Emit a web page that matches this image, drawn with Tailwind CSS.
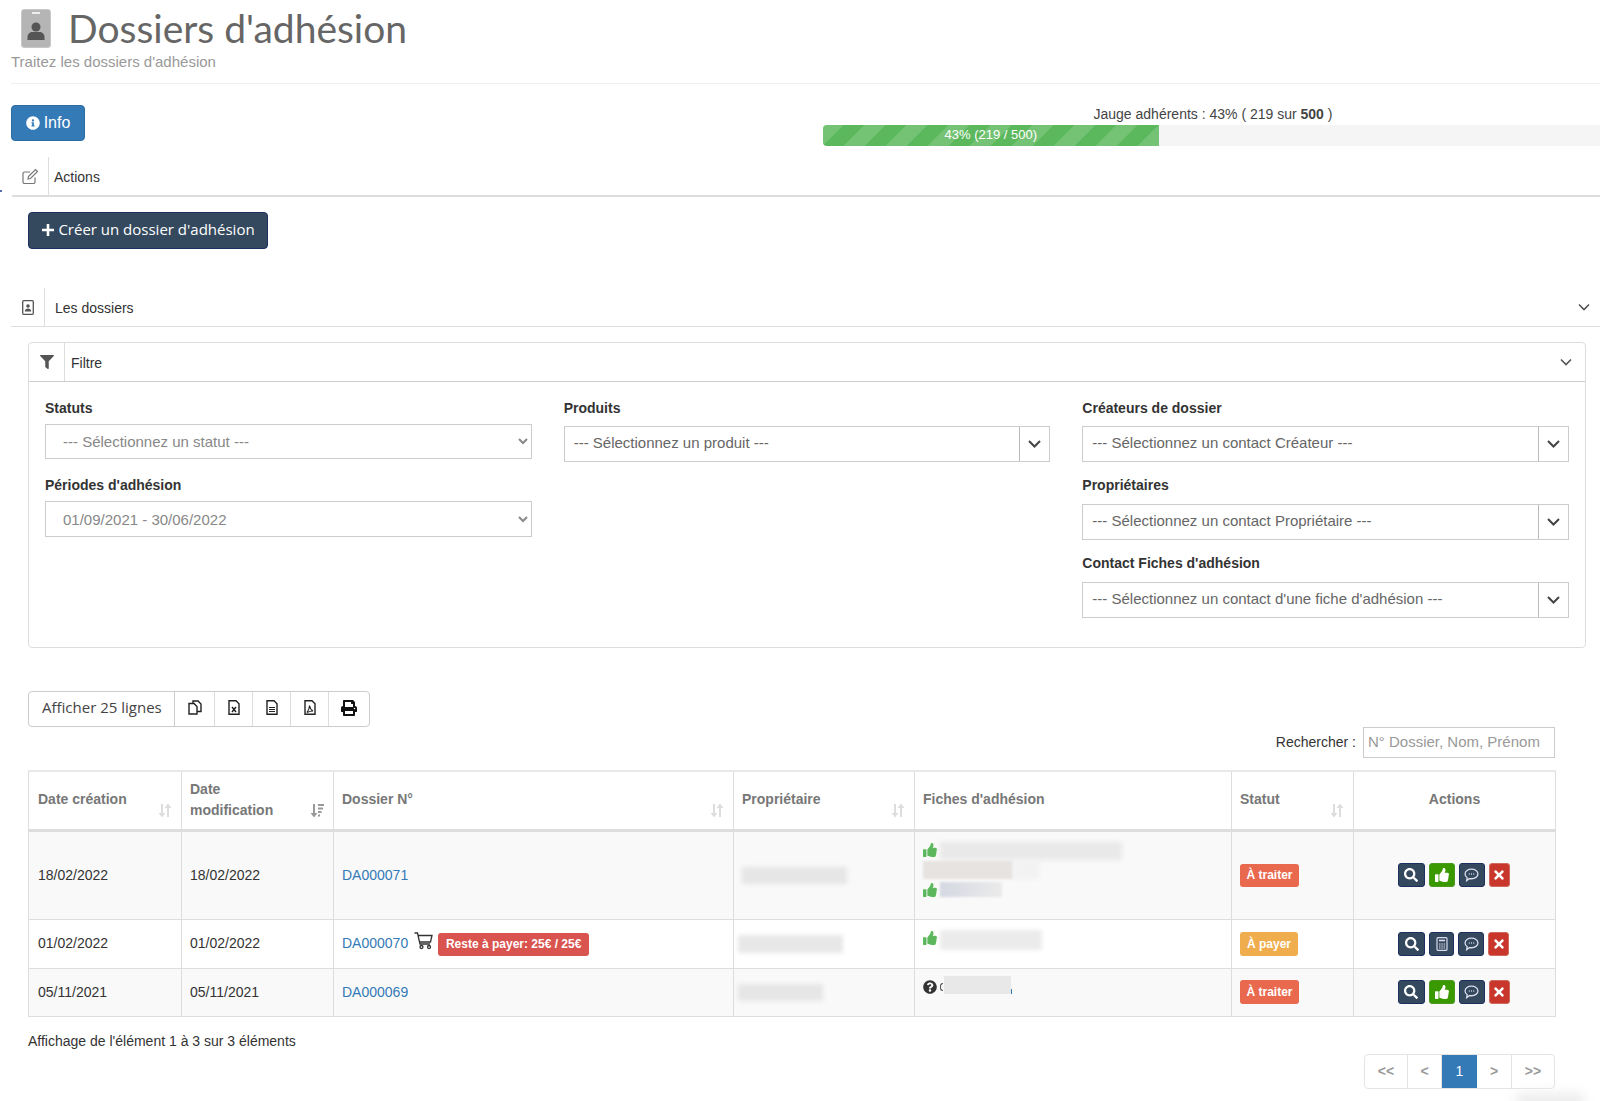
<!DOCTYPE html>
<html lang="fr">
<head>
<meta charset="UTF-8" />
<title>Dossiers d'adhésion</title>
<script src="https://cdn.jsdelivr.net/npm/@tailwindcss/browser@4"></script>
</head>
<body class="bg-white text-[#333] text-[14px] font-['Liberation_Sans',Arial,sans-serif]">
<div class="relative w-[1600px] h-[1101px] overflow-hidden">
  <!-- Title -->
  <header class="ml-[11px] h-[84px] pt-[9px] border-b border-[#eee]">
    <div class="flex items-start h-[38px]">
      <svg class="ml-[10px] w-[30px] h-[39px]" viewBox="0 0 30 39">
        <rect x="0.5" y="0.5" width="29" height="38" rx="2.5" fill="#b5b5b5" stroke="#c8c8c8" />
        <rect x="11" y="3" width="8" height="2" fill="#eee" />
        <circle cx="15" cy="18" r="4.5" fill="#555" />
        <path d="M6.5 31v-3c0-3 2.5-5 5-5h7c2.5 0 5 2 5 5v3z" fill="#555" />
      </svg>
      <h1 class="ml-[17px] text-[39px] leading-[38px] text-[#666] font-['Lato',sans-serif]">Dossiers d'adhésion</h1>
    </div>
    <p class="mt-[6px] text-[15px] leading-[18px] text-[#999]">Traitez les dossiers d'adhésion</p>
  </header>

  <!-- Info + gauge -->
  <section class="mt-[21px] flex justify-between pl-[11px]">
    <button class="h-[36px] w-[74px] pb-[1px] flex items-center justify-center gap-[4px] rounded-[4px] bg-[#337ab7] border border-[#2e6da4] text-white text-[16px]">
      <svg class="w-[14px] h-[14px]" viewBox="0 0 512 512" fill="currentColor"><path d="M256 8C119.043 8 8 119.083 8 256c0 136.997 111.043 248 248 248s248-111.003 248-248C504 119.083 392.957 8 256 8zm0 110c23.196 0 42 18.804 42 42s-18.804 42-42 42-42-18.804-42-42 18.804-42 42-42zm56 254c0 6.627-5.373 12-12 12h-88c-6.627 0-12-5.373-12-12v-24c0-6.627 5.373-12 12-12h12v-64h-12c-6.627 0-12-5.373-12-12v-24c0-6.627 5.373-12 12-12h64c6.627 0 12 5.373 12 12v100h12c6.627 0 12 5.373 12 12v24z"/></svg>
      Info
    </button>
    <div class="w-[777px]">
      <div class="h-[20px] pl-[3px] leading-[19px] text-center text-[#444]">Jauge adhérents : 43% ( 219 sur <b>500</b> )</div>
      <div class="h-[21px] bg-[#f5f5f5] rounded-l-[4px] overflow-hidden">
        <div class="h-full bg-[#5cb85c] bg-[linear-gradient(135deg,rgba(255,255,255,.15)_25%,transparent_25%,transparent_50%,rgba(255,255,255,.15)_50%,rgba(255,255,255,.15)_75%,transparent_75%,transparent)] bg-[length:42px_42px] text-white text-[13px] leading-[20px] text-center" style="width:43.2%">43% (219 / 500)</div>
      </div>
    </div>
  </section>

  <!-- Actions -->
  <div class="absolute left-0 top-[190px] w-[2px] h-[2px] bg-[#1a3d8f] rounded-full"></div>
  <div class="mt-[11px] ml-[12px] h-[40px] flex items-center border-b-2 border-[#ddd]">
    <div class="w-[37px] h-full flex items-center justify-center border-r border-[#ddd]">
      <svg class="w-[17px] h-[17px] text-[#777]" viewBox="0 0 17 17" fill="none" stroke="currentColor" stroke-width="1.2">
        <path d="M13 9.5V14a1.5 1.5 0 0 1-1.5 1.5h-9A1.500 1.500 0 0 1 1 14V5.500A1.500 1.500 0 0 1 2.500 4H8" />
        <path d="M6.500 8.500L13.500 1.500l2 2-7 7-2.500.5z" />
      </svg>
    </div>
    <span class="ml-[5px] pt-[3px]">Actions</span>
  </div>
  <button class="mt-[15px] ml-[28px] w-[240px] h-[37px] pb-[3px] flex items-center justify-center gap-[3px] rounded-[4px] bg-[#34495e] border border-[#1c2f5e] text-white text-[15px] font-['Open_Sans',sans-serif]">
    <svg class="w-[14px] h-[14px] mt-[2px]" viewBox="0 0 14 14"><path d="M7 1v12M1 7h12" stroke="currentColor" stroke-width="2.6" /></svg>
    Créer un dossier d'adhésion
  </button>

  <!-- Les dossiers -->
  <div class="mt-[39px] ml-[11px] h-[39px] flex items-center border-b border-[#ddd]">
    <div class="w-[34px] h-full flex items-center justify-center border-r border-[#ddd]">
      <svg class="w-[12px] h-[15px] text-[#555]" viewBox="0 0 12 15">
        <rect x="0.7" y="0.7" width="10.6" height="13.6" rx="1" fill="none" stroke="currentColor" stroke-width="1.3" />
        <circle cx="6" cy="6" r="1.8" fill="currentColor" />
        <path d="M2.800 11.500c0-2 1.500-3 3.200-3s3.200 1 3.200 3z" fill="currentColor" />
      </svg>
    </div>
    <span class="ml-[10px] pt-[2px]">Les dossiers</span>
    <svg class="ml-auto mr-[10px] w-[12px] h-[8px] text-[#555]" viewBox="0 0 12 8" fill="none" stroke="currentColor" stroke-width="1.6"><path d="M1 1.500l5 5 5-5" /></svg>
  </div>

  <!-- Filtre -->
  <section class="mt-[15px] ml-[28px] w-[1558px] h-[306px] border border-[#ddd] rounded-[4px]">
    <div class="h-[39px] flex items-center border-b border-[#ccc]">
      <div class="w-[36px] h-full flex items-center justify-center border-r border-[#ddd]">
        <svg class="w-[14px] h-[14px] text-[#555]" viewBox="0 0 512 512" fill="currentColor"><path d="M487.976 0H24.028C2.71 0-8.047 25.866 7.058 40.971L192 225.941V432c0 7.831 3.821 15.17 10.237 19.662l80 55.98C298.02 518.69 320 507.493 320 487.98V225.941l184.947-184.97C520.021 25.896 509.338 0 487.976 0z"/></svg>
      </div>
      <span class="ml-[6px] pt-[2px]">Filtre</span>
      <svg class="ml-auto mr-[13px] w-[12px] h-[8px] text-[#555]" viewBox="0 0 12 8" fill="none" stroke="currentColor" stroke-width="1.6"><path d="M1 1.500l5 5 5-5" /></svg>
    </div>
    <div class="grid grid-cols-3 gap-8 px-4 pt-[16px]">
      <div>
        <label class="block font-bold leading-[20px] mb-[6px]">Statuts</label>
        <select class="block w-full h-[35px] pl-[13px] pr-[4px] border border-[#ccc] text-[15px] text-[#888] bg-white"><option>--- Sélectionnez un statut ---</option></select>
        <label class="block font-bold leading-[20px] mt-[16px] mb-[6px]">Périodes d'adhésion</label>
        <select class="block w-full h-[36px] pl-[13px] pr-[4px] border border-[#ccc] text-[15px] text-[#888] bg-white"><option>01/09/2021 - 30/06/2022</option></select>
      </div>
      <div>
        <label class="block font-bold leading-[20px] mb-[8px]">Produits</label>
        <div class="flex h-[36px] border border-[#ccc] text-[15px] text-[#666] items-center">
          <span class="flex-1 pl-[9px] pb-[2px]">--- Sélectionnez un produit ---</span>
          <span class="w-[30px] h-full flex items-center justify-center border-l border-[#bbb]">
            <svg class="w-[13px] h-[8px] text-[#444]" viewBox="0 0 13 8" fill="none" stroke="currentColor" stroke-width="2"><path d="M1 1l5.500 5.500L12 1" /></svg>
          </span>
        </div>
      </div>
      <div>
        <label class="block font-bold leading-[20px] mb-[8px]">Créateurs de dossier</label>
        <div class="flex h-[36px] border border-[#ccc] text-[15px] text-[#666] items-center">
          <span class="flex-1 pl-[9px] pb-[2px]">--- Sélectionnez un contact Créateur ---</span>
          <span class="w-[30px] h-full flex items-center justify-center border-l border-[#bbb]">
            <svg class="w-[13px] h-[8px] text-[#444]" viewBox="0 0 13 8" fill="none" stroke="currentColor" stroke-width="2"><path d="M1 1l5.500 5.500L12 1" /></svg>
          </span>
        </div>
        <label class="block font-bold leading-[20px] mt-[13px] mb-[9px]">Propriétaires</label>
        <div class="flex h-[36px] border border-[#ccc] text-[15px] text-[#666] items-center">
          <span class="flex-1 pl-[9px] pb-[2px]">--- Sélectionnez un contact Propriétaire ---</span>
          <span class="w-[30px] h-full flex items-center justify-center border-l border-[#bbb]">
            <svg class="w-[13px] h-[8px] text-[#444]" viewBox="0 0 13 8" fill="none" stroke="currentColor" stroke-width="2"><path d="M1 1l5.500 5.500L12 1" /></svg>
          </span>
        </div>
        <label class="block font-bold leading-[20px] mt-[13px] mb-[9px]">Contact Fiches d'adhésion</label>
        <div class="flex h-[36px] border border-[#ccc] text-[15px] text-[#666] items-center">
          <span class="flex-1 pl-[9px] pb-[2px]">--- Sélectionnez un contact d'une fiche d'adhésion ---</span>
          <span class="w-[30px] h-full flex items-center justify-center border-l border-[#bbb]">
            <svg class="w-[13px] h-[8px] text-[#444]" viewBox="0 0 13 8" fill="none" stroke="currentColor" stroke-width="2"><path d="M1 1l5.500 5.500L12 1" /></svg>
          </span>
        </div>
      </div>
    </div>
  </section>

  <!-- Toolbar -->
  <div class="mt-[43px] ml-[28px] w-[342px] h-[36px] flex border border-[#ccc] rounded-[4px] text-[15px] font-['Open_Sans',sans-serif] text-[#444]">
    <div class="w-[146px] pb-[3px] flex items-center pl-[13px] border-r border-[#ccc]">Afficher 25 lignes</div>
    <div class="w-[40px] pb-[3px] flex items-center justify-center border-r border-[#ddd]">
      <svg class="w-[14px] h-[15px] text-[#222]" viewBox="0 0 14 15" fill="none" stroke="currentColor" stroke-width="1.4"><path d="M5 3V1h5l3 3v7.500H9" /><path d="M1 3.500h5l3 3v7.500H1z" /></svg>
    </div>
    <div class="w-[38px] pb-[3px] flex items-center justify-center border-r border-[#ddd]">
      <svg class="w-[12px] h-[15px] text-[#222]" viewBox="0 0 12 15" fill="none" stroke="currentColor" stroke-width="1.4"><path d="M1 .7h7l3 3v10.600H1z" /><path d="M4 7l4 5M8 7l-4 5" stroke-width="1.5" /></svg>
    </div>
    <div class="w-[38px] pb-[3px] flex items-center justify-center border-r border-[#ddd]">
      <svg class="w-[12px] h-[15px] text-[#222]" viewBox="0 0 12 15" fill="none" stroke="currentColor" stroke-width="1.4"><path d="M1 .7h7l3 3v10.600H1z" /><path d="M3 7.500h6M3 9.500h6M3 11.500h6" stroke-width="1.1" /></svg>
    </div>
    <div class="w-[38px] pb-[3px] flex items-center justify-center border-r border-[#ddd]">
      <svg class="w-[12px] h-[15px] text-[#222]" viewBox="0 0 12 15" fill="none" stroke="currentColor" stroke-width="1.4"><path d="M1 .7h7l3 3v10.600H1z" /><path d="M5.500 5.500c.5 2.500 1.500 4.500 3.500 5.500-2 0-4 .5-6 1.500 1.500-2 2.500-4.500 2.500-7z" stroke-width="1.1" /></svg>
    </div>
    <div class="flex-1 pb-[3px] flex items-center justify-center">
      <svg class="w-[16px] h-[16px] text-[#111]" viewBox="0 0 512 512" fill="currentColor"><path d="M448 192V77.25c0-8.49-3.37-16.62-9.37-22.63L393.37 9.37c-6-6-14.14-9.37-22.63-9.37H96C78.33 0 64 14.33 64 32v160c-35.35 0-64 28.65-64 64v112c0 8.84 7.16 16 16 16h48v96c0 17.67 14.33 32 32 32h320c17.67 0 32-14.33 32-32v-96h48c8.84 0 16-7.16 16-16V256c0-35.35-28.65-64-64-64zm-64 256H128v-96h256v96zm0-224H128V64h192v48c0 8.84 7.16 16 16 16h48v96zm48 72c-13.25 0-24-10.75-24-24 0-13.26 10.75-24 24-24s24 10.74 24 24c0 13.25-10.75 24-24 24z"/></svg>
    </div>
  </div>

  <!-- Search -->
  <div class="ml-[28px] w-[1527px] flex justify-end items-center h-[31px] gap-[7px]">
    <span>Rechercher :</span>
    <input class="w-[192px] h-[31px] pl-[4px] pb-[2px] border border-[#ccc] text-[15px] placeholder:text-[#999]" placeholder="N° Dossier, Nom, Prénom" />
  </div>

  <!-- Table -->
  <table class="mt-[12px] ml-[28px] w-[1527px] table-fixed border-collapse text-[14px]">
    <colgroup>
      <col class="w-[153px]" /><col class="w-[152px]" /><col class="w-[400px]" /><col class="w-[181px]" /><col class="w-[317px]" /><col class="w-[122px]" /><col class="w-[202px]" />
    </colgroup>
    <thead class="text-[#777] font-bold text-left">
      <tr class="h-[59px] border-t-2 border-[#e8e8e8]">
        <th class="relative pl-[9px] pr-[8px] pb-[1px] border border-b-[3px] border-[#ddd] leading-[21px]">Date création
          <svg class="absolute right-[9px] bottom-[11px] w-[14px] h-[15px] text-[#ddd]" viewBox="0 0 14 15" fill="currentColor"><path d="M3 1h2v9h2.500L4 14.500.5 10H3zM9 14h2V5h2.500L10 .5 6.500 5H9z" /></svg>
        </th>
        <th class="relative px-[8px] pb-[1px] border border-b-[3px] border-[#ddd] leading-[21px]">Date<br />modification
          <svg class="absolute right-[9px] bottom-[11px] w-[14px] h-[15px] text-[#999]" viewBox="0 0 14 15" fill="currentColor"><path d="M3 1h2v9h2.500L4 14.500.5 10H3zM8 1h6v2H8zM8 4.500h5v2H8zM8 8h3.500v2H8zM8 11.500h2v2H8z" /></svg>
        </th>
        <th class="relative px-[8px] pb-[1px] border border-b-[3px] border-[#ddd]">Dossier N°
          <svg class="absolute right-[9px] bottom-[11px] w-[14px] h-[15px] text-[#ddd]" viewBox="0 0 14 15" fill="currentColor"><path d="M3 1h2v9h2.500L4 14.500.5 10H3zM9 14h2V5h2.500L10 .5 6.500 5H9z" /></svg>
        </th>
        <th class="relative px-[8px] pb-[1px] border border-b-[3px] border-[#ddd]">Propriétaire
          <svg class="absolute right-[9px] bottom-[11px] w-[14px] h-[15px] text-[#ddd]" viewBox="0 0 14 15" fill="currentColor"><path d="M3 1h2v9h2.500L4 14.500.5 10H3zM9 14h2V5h2.500L10 .5 6.500 5H9z" /></svg>
        </th>
        <th class="px-[8px] pb-[1px] border border-b-[3px] border-[#ddd]">Fiches d'adhésion</th>
        <th class="relative px-[8px] pb-[1px] border border-b-[3px] border-[#ddd]">Statut
          <svg class="absolute right-[9px] bottom-[11px] w-[14px] h-[15px] text-[#ddd]" viewBox="0 0 14 15" fill="currentColor"><path d="M3 1h2v9h2.500L4 14.500.5 10H3zM9 14h2V5h2.500L10 .5 6.500 5H9z" /></svg>
        </th>
        <th class="px-[8px] pb-[1px] border border-b-[3px] border-[#ddd] text-center">Actions</th>
      </tr>
    </thead>
    <tbody>
      <tr class="h-[89px] bg-[#f9f9f9]">
        <td class="pl-[9px] border border-[#ddd]">18/02/2022</td>
        <td class="px-[8px] border border-[#ddd]">18/02/2022</td>
        <td class="px-[8px] border border-[#ddd]"><a href="#" class="text-[#337ab7]">DA000071</a></td>
        <td class="px-[8px] border border-[#ddd]"><div class="w-[105px] h-[17px] bg-[#e6e6e6] blur-[2px]"></div></td>
        <td class="px-[8px] pt-[10px] align-top border border-[#ddd]">
          <div class="flex items-center h-[18px] gap-[3px]">
            <svg class="w-[14px] h-[14px] -mt-[2px] text-[#5cb85c]" viewBox="0 0 512 512" fill="currentColor"><path d="M104 224H24c-13.255 0-24 10.745-24 24v240c0 13.255 10.745 24 24 24h80c13.255 0 24-10.745 24-24V248c0-13.255-10.745-24-24-24zM384 81.452c0 42.416-25.97 66.208-33.277 94.548h101.723c33.397 0 59.397 27.746 59.553 58.098.084 17.938-7.546 37.249-19.439 49.197l-.11.11c9.836 23.337 8.237 56.037-9.308 79.469 8.681 25.895-.069 57.704-16.382 74.757 4.298 17.598 2.244 32.575-6.148 44.632C440.202 511.587 389.616 512 346.839 512l-2.845-.001c-48.287-.017-87.806-17.598-119.56-31.725-15.957-7.099-36.821-15.887-52.651-16.178-6.54-.12-11.783-5.457-11.783-11.998v-213.77c0-3.2 1.282-6.271 3.558-8.521 39.614-39.144 56.648-80.587 89.117-113.111 14.804-14.832 20.188-37.236 25.393-58.902C282.515 39.293 291.817 0 312 0c24 0 72 8 72 81.452z"/></svg>
            <div class="w-[182px] h-[18px] bg-[#e9e9e9] blur-[2px]"></div>
          </div>
          <div class="flex h-[18px] mt-[1px]">
            <div class="w-[90px] h-[18px] bg-[#e6e3e0] blur-[1px]"></div>
            <div class="w-[26px] h-[18px] bg-[#f2f2f2] blur-[2px]"></div>
          </div>
          <div class="flex items-center h-[18px] mt-[2px] gap-[3px]">
            <svg class="w-[14px] h-[14px] text-[#5cb85c]" viewBox="0 0 512 512" fill="currentColor"><path d="M104 224H24c-13.255 0-24 10.745-24 24v240c0 13.255 10.745 24 24 24h80c13.255 0 24-10.745 24-24V248c0-13.255-10.745-24-24-24zM384 81.452c0 42.416-25.97 66.208-33.277 94.548h101.723c33.397 0 59.397 27.746 59.553 58.098.084 17.938-7.546 37.249-19.439 49.197l-.11.11c9.836 23.337 8.237 56.037-9.308 79.469 8.681 25.895-.069 57.704-16.382 74.757 4.298 17.598 2.244 32.575-6.148 44.632C440.202 511.587 389.616 512 346.839 512l-2.845-.001c-48.287-.017-87.806-17.598-119.56-31.725-15.957-7.099-36.821-15.887-52.651-16.178-6.54-.12-11.783-5.457-11.783-11.998v-213.77c0-3.2 1.282-6.271 3.558-8.521 39.614-39.144 56.648-80.587 89.117-113.111 14.804-14.832 20.188-37.236 25.393-58.902C282.515 39.293 291.817 0 312 0c24 0 72 8 72 81.452z"/></svg>
            <div class="w-[62px] h-[15px] bg-[linear-gradient(90deg,#d5d8e2,#ebebeb)] blur-[1px]"></div>
          </div>
        </td>
        <td class="px-[8px] border border-[#ddd]"><span class="block w-[59px] h-[23px] leading-[23px] text-center rounded-[3px] bg-[#e9694f] text-white text-[12px] font-bold">À traiter</span></td>
        <td class="border border-[#ddd]">
          <div class="flex justify-center gap-[4px] pr-[2px]">
            <span class="w-[27px] h-[24px] flex items-center justify-center rounded-[3px] bg-[#34495e] border border-[#1c2f5e] text-white">
              <svg class="w-[14px] h-[14px]" viewBox="0 0 512 512" fill="currentColor"><path d="M505 442.7L405.3 343c-4.5-4.5-10.6-7-17-7H372c27.6-35.3 44-79.7 44-128C416 93.1 322.9 0 208 0S0 93.1 0 208s93.1 208 208 208c48.3 0 92.7-16.4 128-44v16.3c0 6.4 2.5 12.5 7 17l99.7 99.7c9.4 9.4 24.6 9.4 33.9 0l28.3-28.3c9.4-9.4 9.4-24.6.1-34zM208 336c-70.7 0-128-57.2-128-128 0-70.7 57.2-128 128-128 70.7 0 128 57.2 128 128 0 70.7-57.2 128-128 128z"/></svg>
            </span>
            <span class="w-[26px] h-[24px] flex items-center justify-center rounded-[3px] bg-[#3a9900] border border-[#4a9a20] text-white">
              <svg class="w-[14px] h-[14px]" viewBox="0 0 512 512" fill="currentColor"><path d="M104 224H24c-13.255 0-24 10.745-24 24v240c0 13.255 10.745 24 24 24h80c13.255 0 24-10.745 24-24V248c0-13.255-10.745-24-24-24zM384 81.452c0 42.416-25.97 66.208-33.277 94.548h101.723c33.397 0 59.397 27.746 59.553 58.098.084 17.938-7.546 37.249-19.439 49.197l-.11.11c9.836 23.337 8.237 56.037-9.308 79.469 8.681 25.895-.069 57.704-16.382 74.757 4.298 17.598 2.244 32.575-6.148 44.632C440.202 511.587 389.616 512 346.839 512l-2.845-.001c-48.287-.017-87.806-17.598-119.56-31.725-15.957-7.099-36.821-15.887-52.651-16.178-6.54-.12-11.783-5.457-11.783-11.998v-213.77c0-3.2 1.282-6.271 3.558-8.521 39.614-39.144 56.648-80.587 89.117-113.111 14.804-14.832 20.188-37.236 25.393-58.902C282.515 39.293 291.817 0 312 0c24 0 72 8 72 81.452z"/></svg>
            </span>
            <span class="w-[26px] h-[24px] flex items-center justify-center rounded-[3px] bg-[#34495e] border border-[#1c2f5e] text-[#dde]">
              <svg class="w-[15px] h-[14px]" viewBox="0 0 14 13" fill="none" stroke="currentColor" stroke-width="1.2"><path d="M7 1c3.300 0 6 1.900 6 4.500S10.300 10 7 10c-.7 0-1.300-.1-1.900-.2L2.500 11.800l.5-2.800C1.800 8.200 1 7 1 5.500 1 2.900 3.700 1 7 1z" /><path d="M4.500 5.500h.8M6.600 5.500h.8M8.700 5.500h.8" stroke-width="1.4" /></svg>
            </span>
            <span class="w-[21px] h-[24px] flex items-center justify-center rounded-[3px] bg-[#c9372c] border border-[#d06a60] text-white">
              <svg class="w-[10px] h-[14px]" viewBox="0 0 352 512" fill="currentColor"><path d="M242.72 256l100.07-100.07c12.28-12.28 12.28-32.19 0-44.48l-22.24-22.24c-12.28-12.28-32.19-12.28-44.48 0L176 189.28 75.93 89.21c-12.28-12.28-32.19-12.28-44.48 0L9.21 111.45c-12.28 12.28-12.28 32.19 0 44.48L109.28 256 9.21 356.07c-12.28 12.28-12.28 32.19 0 44.48l22.24 22.24c12.28 12.28 32.2 12.28 44.48 0L176 322.72l100.07 100.07c12.28 12.28 32.2 12.28 44.48 0l22.24-22.24c12.28-12.28 12.28-32.19 0-44.48L242.72 256z"/></svg>
            </span>
          </div>
        </td>
      </tr>
      <tr class="h-[49px] bg-white">
        <td class="pl-[9px] border border-[#ddd]">01/02/2022</td>
        <td class="px-[8px] border border-[#ddd]">01/02/2022</td>
        <td class="px-[8px] border border-[#ddd]">
          <div class="flex items-center">
            <a href="#" class="text-[#337ab7]">DA000070</a>
            <svg class="ml-[6px] w-[19px] h-[18px] -mt-[6px] text-[#333]" viewBox="0 0 19 18" fill="none" stroke="currentColor" stroke-width="1.3"><path d="M.5 1H3.500l2.500 11h10" /><path d="M4 3.500h14l-1.500 6.500H5.500" /><circle cx="7.500" cy="15" r="1.5" /><circle cx="15" cy="15" r="1.5" /></svg>
            <span class="ml-[5px] mt-[1px] w-[151px] h-[23px] leading-[23px] text-center rounded-[3px] bg-[#d9534f] text-white text-[12px] font-bold">Reste à payer: 25€ / 25€</span>
          </div>
        </td>
        <td class="px-[8px] border border-[#ddd]"><div class="-ml-[4px] w-[105px] h-[18px] bg-[#e8e8e8] blur-[2px]"></div></td>
        <td class="px-[8px] pt-[10px] align-top border border-[#ddd]">
          <div class="flex items-start gap-[3px]">
            <svg class="w-[14px] h-[14px] mt-[1px] text-[#5cb85c]" viewBox="0 0 512 512" fill="currentColor"><path d="M104 224H24c-13.255 0-24 10.745-24 24v240c0 13.255 10.745 24 24 24h80c13.255 0 24-10.745 24-24V248c0-13.255-10.745-24-24-24zM384 81.452c0 42.416-25.97 66.208-33.277 94.548h101.723c33.397 0 59.397 27.746 59.553 58.098.084 17.938-7.546 37.249-19.439 49.197l-.11.11c9.836 23.337 8.237 56.037-9.308 79.469 8.681 25.895-.069 57.704-16.382 74.757 4.298 17.598 2.244 32.575-6.148 44.632C440.202 511.587 389.616 512 346.839 512l-2.845-.001c-48.287-.017-87.806-17.598-119.56-31.725-15.957-7.099-36.821-15.887-52.651-16.178-6.54-.12-11.783-5.457-11.783-11.998v-213.77c0-3.2 1.282-6.271 3.558-8.521 39.614-39.144 56.648-80.587 89.117-113.111 14.804-14.832 20.188-37.236 25.393-58.902C282.515 39.293 291.817 0 312 0c24 0 72 8 72 81.452z"/></svg>
            <div class="w-[102px] h-[20px] bg-[#ebebeb] blur-[2px]"></div>
          </div>
        </td>
        <td class="px-[8px] border border-[#ddd]"><span class="block w-[58px] h-[24px] leading-[24px] text-center rounded-[3px] bg-[#f0ad4e] text-white text-[12px] font-bold">À payer</span></td>
        <td class="border border-[#ddd]">
          <div class="flex justify-center gap-[4px] pr-[2px]">
            <span class="w-[27px] h-[24px] flex items-center justify-center rounded-[3px] bg-[#34495e] border border-[#1c2f5e] text-white">
              <svg class="w-[14px] h-[14px]" viewBox="0 0 512 512" fill="currentColor"><path d="M505 442.7L405.3 343c-4.5-4.5-10.6-7-17-7H372c27.6-35.3 44-79.7 44-128C416 93.1 322.9 0 208 0S0 93.1 0 208s93.1 208 208 208c48.3 0 92.7-16.4 128-44v16.3c0 6.4 2.5 12.5 7 17l99.7 99.7c9.4 9.4 24.6 9.4 33.9 0l28.3-28.3c9.4-9.4 9.4-24.6.1-34zM208 336c-70.7 0-128-57.2-128-128 0-70.7 57.2-128 128-128 70.7 0 128 57.2 128 128 0 70.7-57.2 128-128 128z"/></svg>
            </span>
            <span class="w-[25px] h-[24px] flex items-center justify-center rounded-[3px] bg-[#34495e] border border-[#1c2f5e] text-[#dde]">
              <svg class="w-[12px] h-[14px]" viewBox="0 0 12 14" fill="none" stroke="currentColor"><rect x="1" y=".7" width="10" height="12.6" rx="1" stroke-width="1.2" /><path d="M3 3.500h6" stroke-width="1.6" /><path d="M3 7h1.500M5.300 7h1.500M7.600 7h1.500M3 9h1.500M5.300 9h1.500M7.600 9h1.500M3 11h1.500M5.300 11h1.500M7.600 11h1.500" stroke-width="1.2" /></svg>
            </span>
            <span class="w-[26px] h-[24px] flex items-center justify-center rounded-[3px] bg-[#34495e] border border-[#1c2f5e] text-[#dde]">
              <svg class="w-[15px] h-[14px]" viewBox="0 0 14 13" fill="none" stroke="currentColor" stroke-width="1.2"><path d="M7 1c3.300 0 6 1.900 6 4.500S10.300 10 7 10c-.7 0-1.300-.1-1.900-.2L2.500 11.800l.5-2.800C1.800 8.200 1 7 1 5.500 1 2.900 3.700 1 7 1z" /><path d="M4.500 5.500h.8M6.600 5.500h.8M8.700 5.500h.8" stroke-width="1.4" /></svg>
            </span>
            <span class="w-[21px] h-[24px] flex items-center justify-center rounded-[3px] bg-[#c9372c] border border-[#d06a60] text-white">
              <svg class="w-[10px] h-[14px]" viewBox="0 0 352 512" fill="currentColor"><path d="M242.72 256l100.07-100.07c12.28-12.28 12.28-32.19 0-44.48l-22.24-22.24c-12.28-12.28-32.19-12.28-44.48 0L176 189.28 75.93 89.21c-12.28-12.28-32.19-12.28-44.48 0L9.21 111.45c-12.28 12.28-12.28 32.19 0 44.48L109.28 256 9.21 356.07c-12.28 12.28-12.28 32.19 0 44.48l22.24 22.24c12.28 12.28 32.2 12.28 44.48 0L176 322.72l100.07 100.07c12.28 12.28 32.2 12.28 44.48 0l22.24-22.24c12.28-12.28 12.28-32.19 0-44.48L242.72 256z"/></svg>
            </span>
          </div>
        </td>
      </tr>
      <tr class="h-[48px] bg-[#f9f9f9]">
        <td class="pl-[9px] border border-[#ddd]">05/11/2021</td>
        <td class="px-[8px] border border-[#ddd]">05/11/2021</td>
        <td class="px-[8px] border border-[#ddd]"><a href="#" class="text-[#337ab7]">DA000069</a></td>
        <td class="px-[8px] border border-[#ddd]"><div class="-ml-[4px] w-[85px] h-[17px] bg-[#e6e6e6] blur-[2px]"></div></td>
        <td class="px-[8px] pt-[7px] align-top border border-[#ddd]">
          <div class="flex items-start">
            <svg class="w-[14px] h-[14px] mt-[4px] text-[#333]" viewBox="0 0 512 512" fill="currentColor"><path d="M504 256c0 136.997-111.043 248-248 248S8 392.997 8 256C8 119.083 119.043 8 256 8s248 111.083 248 248zM262.655 90c-54.497 0-89.255 22.957-116.549 63.758-3.536 5.286-2.353 12.415 2.715 16.258l34.699 26.31c5.205 3.947 12.621 3.008 16.665-2.122 17.864-22.658 30.113-35.797 57.303-35.797 20.429 0 45.698 13.148 45.698 32.958 0 14.976-12.363 22.667-32.534 33.976C247.128 238.528 216 254.941 216 296v4c0 6.627 5.373 12 12 12h56c6.627 0 12-5.373 12-12v-1.333c0-28.462 83.186-29.647 83.186-106.667 0-58.002-60.165-102-116.531-102zM256 338c-25.365 0-46 20.635-46 46 0 25.364 20.635 46 46 46s46-20.636 46-46c0-25.365-20.635-46-46-46z"/></svg>
            <div class="ml-[3px] mt-[7px] w-[3px] h-[8px] rounded-l-full border-l border-y border-[#555]"></div>
            <div class="ml-[1px] w-[67px] h-[18px] bg-[#e8e8e8]"></div>
            <div class="w-[1px] h-[5px] mt-[13px] bg-[#337ab7]"></div>
          </div>
        </td>
        <td class="px-[8px] border border-[#ddd]"><span class="block w-[59px] h-[24px] leading-[24px] text-center rounded-[3px] bg-[#e9694f] text-white text-[12px] font-bold">À traiter</span></td>
        <td class="border border-[#ddd]">
          <div class="flex justify-center gap-[4px] pr-[2px]">
            <span class="w-[27px] h-[24px] flex items-center justify-center rounded-[3px] bg-[#34495e] border border-[#1c2f5e] text-white">
              <svg class="w-[14px] h-[14px]" viewBox="0 0 512 512" fill="currentColor"><path d="M505 442.7L405.3 343c-4.5-4.5-10.6-7-17-7H372c27.6-35.3 44-79.7 44-128C416 93.1 322.9 0 208 0S0 93.1 0 208s93.1 208 208 208c48.3 0 92.7-16.4 128-44v16.3c0 6.4 2.5 12.5 7 17l99.7 99.7c9.4 9.4 24.6 9.4 33.9 0l28.3-28.3c9.4-9.4 9.4-24.6.1-34zM208 336c-70.7 0-128-57.2-128-128 0-70.7 57.2-128 128-128 70.7 0 128 57.2 128 128 0 70.7-57.2 128-128 128z"/></svg>
            </span>
            <span class="w-[26px] h-[24px] flex items-center justify-center rounded-[3px] bg-[#3a9900] border border-[#4a9a20] text-white">
              <svg class="w-[14px] h-[14px]" viewBox="0 0 512 512" fill="currentColor"><path d="M104 224H24c-13.255 0-24 10.745-24 24v240c0 13.255 10.745 24 24 24h80c13.255 0 24-10.745 24-24V248c0-13.255-10.745-24-24-24zM384 81.452c0 42.416-25.97 66.208-33.277 94.548h101.723c33.397 0 59.397 27.746 59.553 58.098.084 17.938-7.546 37.249-19.439 49.197l-.11.11c9.836 23.337 8.237 56.037-9.308 79.469 8.681 25.895-.069 57.704-16.382 74.757 4.298 17.598 2.244 32.575-6.148 44.632C440.202 511.587 389.616 512 346.839 512l-2.845-.001c-48.287-.017-87.806-17.598-119.56-31.725-15.957-7.099-36.821-15.887-52.651-16.178-6.54-.12-11.783-5.457-11.783-11.998v-213.77c0-3.2 1.282-6.271 3.558-8.521 39.614-39.144 56.648-80.587 89.117-113.111 14.804-14.832 20.188-37.236 25.393-58.902C282.515 39.293 291.817 0 312 0c24 0 72 8 72 81.452z"/></svg>
            </span>
            <span class="w-[26px] h-[24px] flex items-center justify-center rounded-[3px] bg-[#34495e] border border-[#1c2f5e] text-[#dde]">
              <svg class="w-[15px] h-[14px]" viewBox="0 0 14 13" fill="none" stroke="currentColor" stroke-width="1.2"><path d="M7 1c3.300 0 6 1.900 6 4.500S10.300 10 7 10c-.7 0-1.300-.1-1.900-.2L2.500 11.800l.5-2.800C1.800 8.200 1 7 1 5.500 1 2.900 3.700 1 7 1z" /><path d="M4.500 5.500h.8M6.600 5.500h.8M8.700 5.500h.8" stroke-width="1.4" /></svg>
            </span>
            <span class="w-[21px] h-[24px] flex items-center justify-center rounded-[3px] bg-[#c9372c] border border-[#d06a60] text-white">
              <svg class="w-[10px] h-[14px]" viewBox="0 0 352 512" fill="currentColor"><path d="M242.72 256l100.07-100.07c12.28-12.28 12.28-32.19 0-44.48l-22.24-22.24c-12.28-12.28-32.19-12.28-44.48 0L176 189.28 75.93 89.21c-12.28-12.28-32.19-12.28-44.48 0L9.21 111.45c-12.28 12.28-12.28 32.19 0 44.48L109.28 256 9.21 356.07c-12.28 12.28-12.28 32.19 0 44.48l22.24 22.24c12.28 12.28 32.2 12.28 44.48 0L176 322.72l100.07 100.07c12.28 12.28 32.2 12.28 44.48 0l22.24-22.24c12.28-12.28 12.28-32.19 0-44.48L242.72 256z"/></svg>
            </span>
          </div>
        </td>
      </tr>
    </tbody>
  </table>

  <!-- Footer -->
  <p class="mt-[14px] ml-[28px] leading-[20px]">Affichage de l'élément 1 à 3 sur 3 éléments</p>
  <nav class="mt-[3px] ml-[1364px] w-[191px] h-[35px] flex border border-[#e4e4e4] rounded-[4px] text-[#999] font-bold">
    <span class="w-[43px] flex items-center justify-center border-r border-[#e4e4e4]">&lt;&lt;</span>
    <span class="w-[34px] flex items-center justify-center border-r border-[#e4e4e4]">&lt;</span>
    <span class="w-[35px] flex items-center justify-center bg-[#337ab7] text-white font-normal">1</span>
    <span class="w-[35px] flex items-center justify-center border-r border-[#e4e4e4]">&gt;</span>
    <span class="flex-1 flex items-center justify-center">&gt;&gt;</span>
  </nav>
  <div class="absolute left-[1515px] top-[1093px] w-[70px] h-[16px] bg-[#ececec] blur-[6px] rounded-full"></div>
</div>
</body>
</html>
